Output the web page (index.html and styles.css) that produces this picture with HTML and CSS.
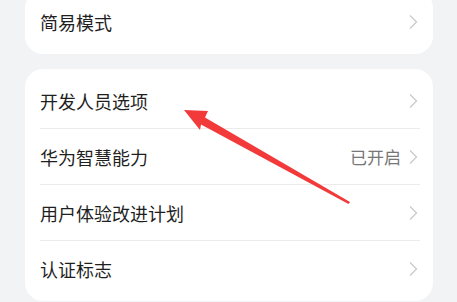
FILE: index.html
```html
<!DOCTYPE html>
<html lang="zh-CN">
<head>
  <meta charset="UTF-8">
  <meta name="viewport" content="width=device-width, initial-scale=1.0">
  <title>设置</title>
  <link rel="stylesheet" href="styles.css">
</head>
<body>
  <div class="card card-top">
    <div class="row">
      <span class="label">简易模式</span>
      <svg class="chevron" viewBox="0 0 10 16"><path d="M2 1.5 8.5 8 2 14.5" /></svg>
    </div>
  </div>

  <div class="card">
    <div class="row">
      <span class="label">开发人员选项</span>
      <svg class="chevron" viewBox="0 0 10 16"><path d="M2 1.5 8.5 8 2 14.5" /></svg>
    </div>
    <div class="row">
      <span class="label">华为智慧能力</span>
      <span class="value">已开启</span>
      <svg class="chevron" viewBox="0 0 10 16"><path d="M2 1.5 8.5 8 2 14.5" /></svg>
    </div>
    <div class="row">
      <span class="label">用户体验改进计划</span>
      <svg class="chevron" viewBox="0 0 10 16"><path d="M2 1.5 8.5 8 2 14.5" /></svg>
    </div>
    <div class="row">
      <span class="label">认证标志</span>
      <svg class="chevron" viewBox="0 0 10 16"><path d="M2 1.5 8.5 8 2 14.5" /></svg>
    </div>
  </div>

  <!-- 标注箭头 -->
  <svg class="arrow" viewBox="0 0 457 302">
    <polygon points="184,110 208,111 205,117.5 350,202 348.5,204 201,124.5 200,130" />
  </svg>
</body>
</html>
```

FILE: styles.css
```css
body {
  font-family: "Noto Sans CJK SC", "Noto Sans", sans-serif;
  margin: 0;
  padding: 0 24px 0 25px;
  background-color: #f1f3f5;
  width: 457px;
  height: 302px;
  box-sizing: border-box;
  overflow: hidden;
  position: relative;
}
.card {
  background-color: #fff;
  border-radius: 18px;
  padding: 4px 0;
  margin-bottom: 15px;
}
.card-top {
  margin-top: -10px;
}
.row {
  display: flex;
  align-items: center;
  height: 56px;
  margin: 0 13px 0 15px;
  border-bottom: 1px solid #ebebeb;
  box-sizing: border-box;
}
.row:last-child {
  border-bottom: none;
}
.label {
  flex: 1;
  font-size: 18px;
  color: #1f1f1f;
}
.value {
  font-size: 17px;
  color: #777;
  margin-right: 7px;
}
.chevron {
  width: 10px;
  height: 16px;
  margin-right: 2px;
  fill: none;
  stroke: #cacaca;
  stroke-width: 1.3;
}
.arrow {
  position: absolute;
  top: 0;
  left: 0;
  width: 457px;
  height: 302px;
  fill: #f23a3b;
}
```
